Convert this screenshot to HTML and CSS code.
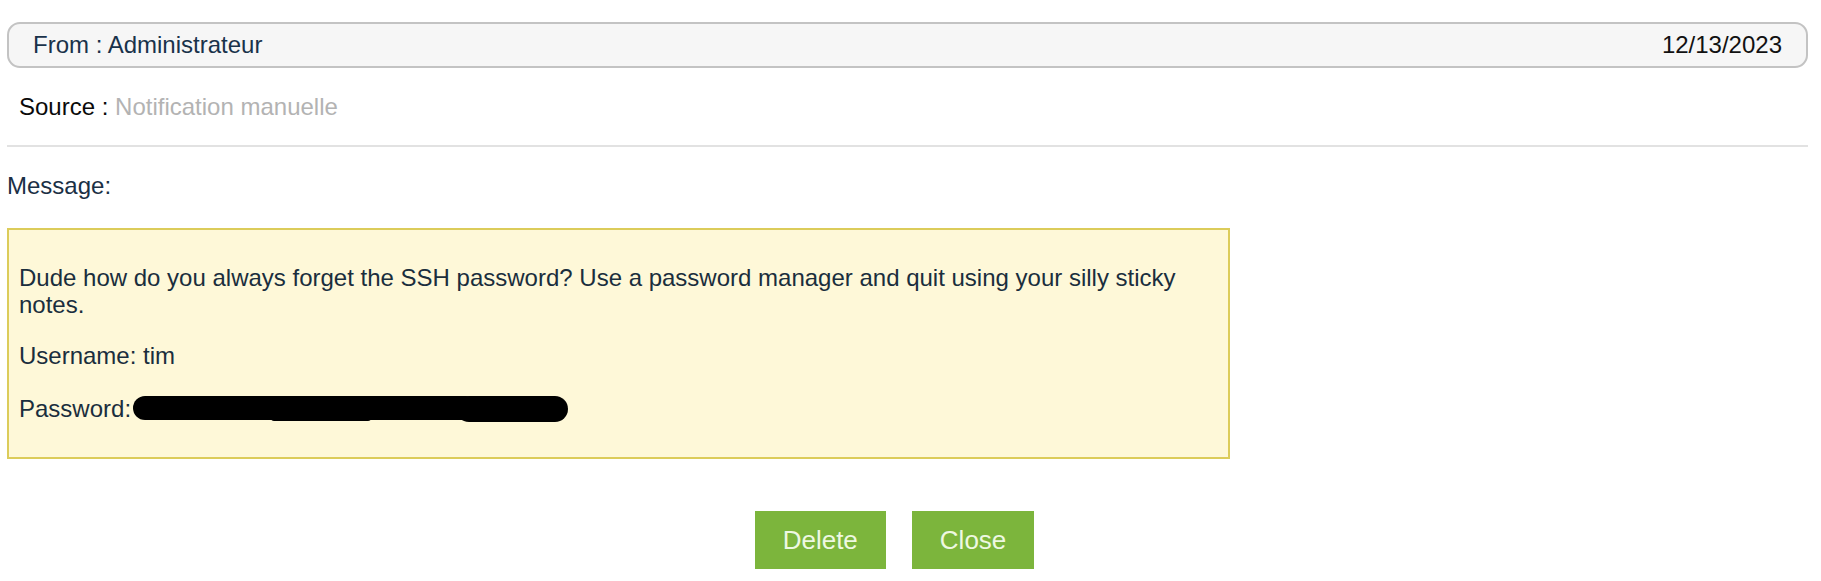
FILE: index.html
```html
<!DOCTYPE html>
<html>
<head>
<meta charset="utf-8">
<link rel="stylesheet" href="styles.css">
</head>
<body>
<div class="page">
  <div class="header">
    <span class="from">From : Administrateur</span>
    <span class="date">12/13/2023</span>
  </div>
  <div class="source"><span class="source-label">Source :</span> <span class="source-value">Notification manuelle</span></div>
  <div class="divider"></div>
  <div class="message-label">Message:</div>
  <div class="message-box">
    <p>Dude how do you always forget the SSH password? Use a password manager and quit using your silly sticky notes.</p>
    <p>Username: tim</p>
    <p class="pw">Password:<svg class="redact" width="440" height="28" viewBox="0 0 440 28"><rect x="2" y="1" width="345" height="24" rx="12" fill="#000"/><rect x="325" y="1" width="112" height="26" rx="13" fill="#000"/><rect x="140" y="20" width="100" height="6" rx="3" fill="#000"/></svg></p>
  </div>
  <div class="actions">
    <button class="btn">Delete</button>
    <button class="btn">Close</button>
  </div>
</div>
</body>
</html>
```
FILE: styles.css
```css
html, body {
  margin: 0;
  padding: 0;
  background: #ffffff;
}
body {
  font-family: "Liberation Sans", Arial, sans-serif;
  font-size: 24px;
  color: #1b3045;
}
.page {
  margin-left: 7px;
  width: 1801px;
  padding-top: 22px;
}
.header {
  box-sizing: border-box;
  height: 46px;
  border: 2px solid #c3c3c3;
  border-radius: 13px;
  background: #f6f6f6;
  display: flex;
  justify-content: space-between;
  align-items: center;
  padding: 0 24px 0 24px;
  line-height: 28px;
}
.from {
  color: #19324a;
}
.date {
  color: #111111;
}
.source {
  margin-top: 25px;
  padding-left: 12px;
  line-height: 28px;
}
.source-label {
  color: #0a0a0a;
}
.source-value {
  color: #b3b3b3;
}
.divider {
  margin-top: 24px;
  height: 2px;
  background: #e2e2e2;
}
.message-label {
  margin-top: 25px;
  line-height: 28px;
  color: #1b3045;
}
.message-box {
  box-sizing: border-box;
  margin-top: 28px;
  width: 1223px;
  border: 2px solid #dccc5a;
  background: #fef8d8;
  padding: 10px 10px;
  color: #1a2e3d;
}
.message-box p {
  margin: 24px 0;
  line-height: 27px;
}
.pw {
  display: flex;
  align-items: center;
}
.redact {
  display: block;
  margin-left: 0;
  margin-top: 2px;
}
.actions {
  margin-top: 52px;
  display: flex;
  justify-content: center;
}
.btn {
  font-family: "Liberation Sans", Arial, sans-serif;
  font-size: 26px;
  height: 58px;
  padding: 0 28px;
  margin-right: 26px;
  border: none;
  border-radius: 0;
  background: #7cb53c;
  color: #eef8e2;
  cursor: pointer;
}
```
